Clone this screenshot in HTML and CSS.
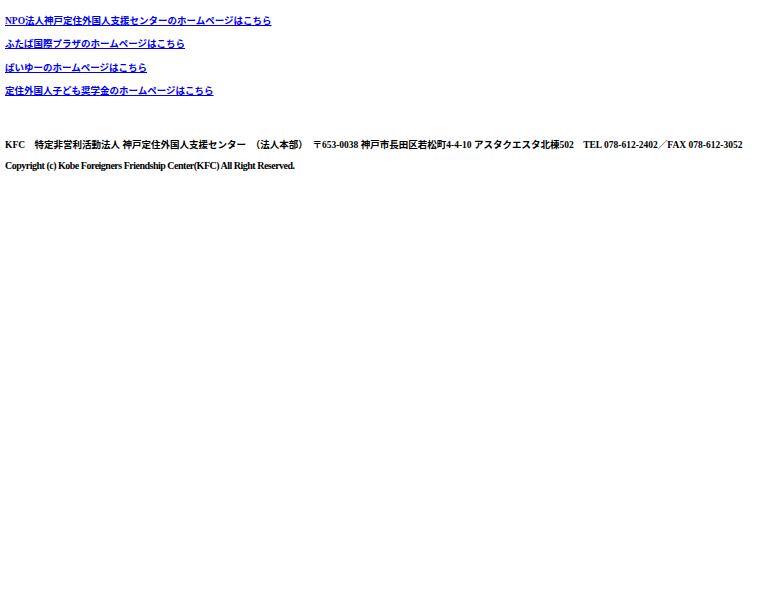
FILE: index.html
```html
<!DOCTYPE html>
<html lang="ja">
<head>
<meta charset="utf-8">
<title>KFC</title>
<link rel="stylesheet" href="styles.css">
</head>
<body>
<div class="links">
<p class="item"><a href="#">NPO法人神戸定住外国人支援センターのホームページはこちら</a></p>
<p class="item"><a href="#">ふたば国際プラザのホームページはこちら</a></p>
<p class="item"><a href="#">ぱいゆーのホームページはこちら</a></p>
<p class="item"><a href="#">定住外国人子ども奨学金のホームページはこちら</a></p>
</div>
<div class="footer">
<p class="address">KFC　特定非営利活動法人 神戸定住外国人支援センター　（法人本部）　〒653-0038 神戸市長田区若松町4-4-10 アスタクエスタ北棟502　TEL 078-612-2402／FAX 078-612-3052</p>
<p class="copy">Copyright (c) Kobe Foreigners Friendship Center(KFC) All Right Reserved.</p>
</div>
</body>
</html>
```
FILE: styles.css
```css
body {
  margin: 3px 5px 5px;
  font-family: "Liberation Serif", "Noto Sans CJK JP", serif;
  font-weight: bold;
  font-size: 9.5px;
  color: #000;
  background: #fff;
}
.item {
  margin: 9.5px 0;
}
.item a {
  color: #0000ee;
  text-decoration: underline;
}
.footer {
  margin-top: 40px;
}
.address {
  margin: 0 0 9px;
  white-space: nowrap;
}
.copy {
  margin: 0;
  font-size: 10px;
  letter-spacing: -0.5px;
}
```
